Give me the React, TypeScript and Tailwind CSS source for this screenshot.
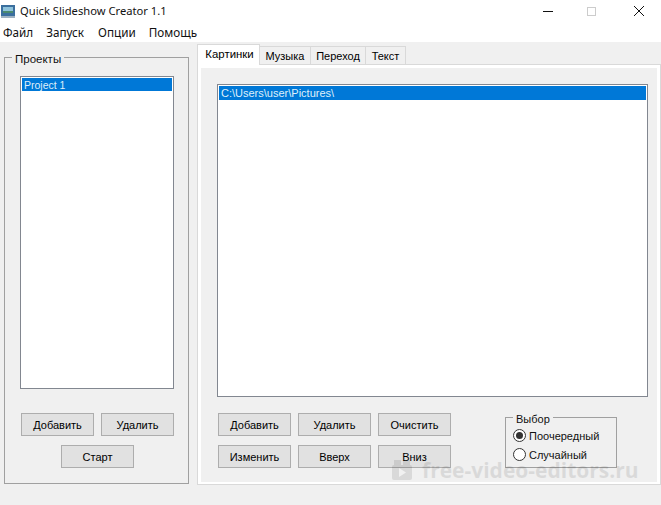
import React from "react";

function Btn({ children }: { children: React.ReactNode }) {
  return (
    <button className="w-[73px] h-[23px] shrink-0 border border-[#adadad] bg-[#e1e1e1] text-[11px] leading-[20px] text-black">
      {children}
    </button>
  );
}

function Radio({ label, checked }: { label: string; checked?: boolean }) {
  return (
    <div className="flex items-center h-[19px]">
      <span className="w-[13px] h-[13px] rounded-full border border-[#333333] bg-white flex items-center justify-center shrink-0">
        {checked && <span className="w-[7px] h-[7px] rounded-full bg-[#333333]" />}
      </span>
      <span className="ml-[3px] text-[11px] leading-[14px] text-[#111111]">{label}</span>
    </div>
  );
}

function Tab({ label, active, width }: { label: string; active?: boolean; width: string }) {
  return active ? (
    <div className={`${width} h-[21px] -mb-[1px] z-10 border border-b-0 border-[#d9d9d9] bg-white text-center pl-[2px] pt-[2px] text-[11.4px] leading-[14px] text-black`}>
      {label}
    </div>
  ) : (
    <div className={`${width} h-[18px] border border-l-0 border-b-0 border-[#d9d9d9] bg-[#f0f0f0] text-center pt-[2px] text-[11px] leading-[14px] text-black`}>
      {label}
    </div>
  );
}

export default function App() {
  return (
    <div
      className="relative w-[661px] h-[505px] overflow-hidden flex flex-col bg-[#f0f0f0] text-black"
      style={{ fontFamily: '"Liberation Sans", Arial, sans-serif' }}
    >
      <div className="h-[42px] bg-white shrink-0 flex flex-col">
        <div className="h-[22px] flex items-center">
          <svg width="14" height="13" viewBox="0 0 14 13" className="ml-[1px] mr-[5px] shrink-0">
            <rect x="0" y="0" width="14" height="11" fill="#3b6f9e" />
            <rect x="2" y="2" width="10" height="6" fill="#8fc3dc" />
            <rect x="2" y="6" width="10" height="2" fill="#4b8a6e" />
            <rect x="0" y="11" width="14" height="2" fill="#9fb2c2" />
          </svg>
          <span className="text-[11.2px] leading-[16px] text-[#111111] font-['Noto_Sans',sans-serif]">Quick Slideshow Creator 1.1</span>
          <div className="ml-auto flex items-center">
            <svg width="12" height="12" viewBox="0 0 12 12" className="mr-[32px]">
              <path d="M1 6.5H11" stroke="#111111" strokeWidth="1" />
            </svg>
            <svg width="11" height="11" viewBox="0 0 11 11" className="mr-[36px]">
              <rect x="1.5" y="1.5" width="8" height="8" fill="none" stroke="#cccccc" strokeWidth="1" />
            </svg>
            <svg width="12" height="12" viewBox="0 0 12 12" className="mr-[16px]">
              <path d="M1 1L11 11M11 1L1 11" stroke="#111111" strokeWidth="1" />
            </svg>
          </div>
        </div>
        <div className="h-[20px] flex items-center pl-[3px] gap-[13px] text-[11.7px] leading-[14px] text-[#111111] font-['Noto_Sans',sans-serif]">
          <span>Файл</span>
          <span>Запуск</span>
          <span className="ml-[1px]">Опции</span>
          <span>Помощь</span>
        </div>
      </div>

      <div className="flex flex-1 pl-[4px] pt-[6px]">
        <fieldset className="w-[184px] h-[436px] shrink-0 border border-[#a0a0a0] pl-[15px] pr-[14px]">
          <legend className="-ml-[8px] px-[3px] pt-[4px] pb-[1px] text-[11.5px] leading-[14px] text-[#111111]">Проекты</legend>
          <div className="h-[313px] mt-[9px] border border-[#828790] bg-white p-[1px]">
            <div className="h-[13px] bg-[#0078d7] pl-[2px] text-[10.5px] leading-[14px] text-[#dfeffa]">Project 1</div>
          </div>
          <div className="mt-[24px] flex gap-[7px] pl-[1px]">
            <Btn>Добавить</Btn>
            <Btn>Удалить</Btn>
          </div>
          <div className="mt-[9px] flex justify-center pl-[1px]">
            <Btn>Старт</Btn>
          </div>
        </fieldset>

        <div className="ml-[8px] flex-1 flex flex-col -mt-[4px]">
          <div className="flex items-end h-[20px]">
            <Tab label="Картинки" active width="w-[63px]" />
            <Tab label="Музыка" width="w-[51px]" />
            <Tab label="Переход" width="w-[55px]" />
            <Tab label="Текст" width="w-[40px]" />
          </div>
          <div className="h-[421px] border border-[#d9d9d9] bg-white pl-[3px] pr-[3px] pt-[3px] pb-[2px]">
            <div className="h-full bg-[#f0f0f0] pl-[16px] pr-[9px] pt-[16px] flex flex-col">
              <div className="h-[313px] shrink-0 border border-[#828790] bg-white p-[1px]">
                <div className="h-[14px] bg-[#0078d7] pl-[2px] text-[11px] leading-[14px] text-[#dfeffa]">C:\Users\user\Pictures\</div>
              </div>
              <div className="flex mt-[16px] pl-[1px]">
                <div className="flex flex-col gap-[9px]">
                  <div className="flex gap-[7px]">
                    <Btn>Добавить</Btn>
                    <Btn>Удалить</Btn>
                    <Btn>Очистить</Btn>
                  </div>
                  <div className="flex gap-[7px]">
                    <Btn>Изменить</Btn>
                    <Btn>Вверх</Btn>
                    <Btn>Вниз</Btn>
                  </div>
                </div>
                <fieldset className="ml-[54px] -mt-[5px] w-[112px] h-[60px] border border-[#a0a0a0] pl-[7px]">
                  <legend className="px-[3px] pt-[4px] pb-[1px] text-[11px] leading-[14px] text-[#111111]">Выбор</legend>
                  <div className="-mt-[1px]">
                    <Radio label="Поочередный" checked />
                    <Radio label="Случайный" />
                  </div>
                </fieldset>
              </div>
            </div>
          </div>
        </div>
      </div>

      <div className="absolute left-[392px] top-[460px] flex items-center opacity-[0.09] text-black">
        <svg width="20" height="20" viewBox="0 0 20 20" className="mr-[10px]">
          <rect x="0" y="5" width="20" height="15" rx="2" fill="#000000" />
          <rect x="2" y="0" width="7" height="5" fill="#000000" />
          <rect x="11" y="0" width="7" height="5" fill="#000000" />
          <path d="M7 8L14 12.5L7 17Z" fill="#ffffff" />
        </svg>
        <span className="text-[21px] leading-[20px] font-bold font-['Open_Sans',sans-serif]">free-video-editors.ru</span>
      </div>
    </div>
  );
}
